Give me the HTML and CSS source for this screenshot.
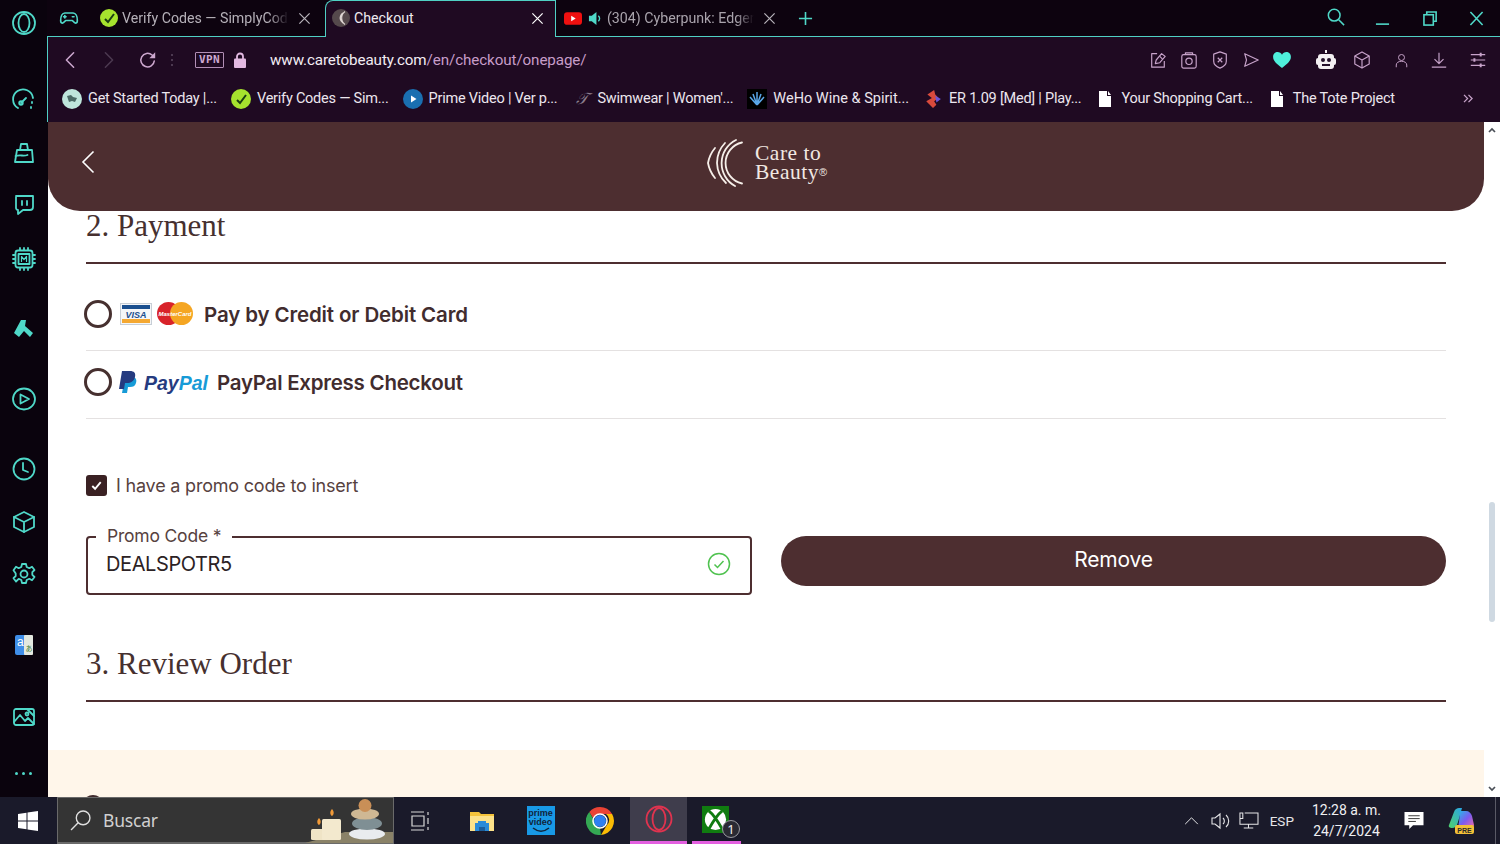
FILE: index.html
```html
<!DOCTYPE html>
<html lang="en">
<head>
<meta charset="utf-8">
<title>Checkout</title>
<link rel="stylesheet" href="styles.css">
</head>
<body>
<div class="app">
  <nav class="sidebar">
    <svg class="side-icon first" viewBox="0 0 24 24"><circle cx="12" cy="12" r="11"/><ellipse cx="12" cy="12" rx="5.500" ry="9"/></svg>
    <svg class="side-icon g53" viewBox="0 0 24 24"><path d="M6 20A10 10 0 1 1 21 10"/><path d="M9 15l5-5"/><circle cx="9" cy="15" r="1.800"/><path d="M20 14v1M19 19v1"/></svg>
    <svg class="side-icon g29" viewBox="0 0 24 24"><path d="M8 9l1-6h6l1 6"/><path d="M5 9h15l1 12H3z"/><path d="M3.500 15c5-1.500 8 .5 12-1"/></svg>
    <svg class="side-icon g28" viewBox="0 0 24 24"><path d="M4 3h17v11a3 3 0 0 1-3 3h-7l-5 4v-4a2 2 0 0 1-2-2V4a1 1 0 0 1 1-1z"/><path d="M10 8v4M15 8v4"/></svg>
    <svg class="side-icon g30" viewBox="0 0 24 24"><rect x="3.500" y="3.500" width="17" height="17" rx="2.500"/><rect x="6.500" y="7" width="11" height="10"/><path d="M8 1v2M12 1v2M16 1v2M8 21v2M12 21v2M16 21v2M1 8h2M1 12h2M1 16h2M21 8h2M21 12h2M21 16h2"/><path class="thin" d="M9.500 14.500v-5l2.500 3 2.500-3v5"/></svg>
    <svg class="side-icon g46" viewBox="0 0 24 24"><path class="solid" d="M9 3h5l-1 6 8 7-3 4-6-6-5 6-5-4z"/></svg>
    <svg class="side-icon g46" viewBox="0 0 24 24"><ellipse cx="12" cy="12" rx="11" ry="10.500"/><path d="M8.500 7.500 17 12l-8.500 4.500z"/></svg>
    <svg class="side-icon g46" viewBox="0 0 24 24"><circle cx="12" cy="12" r="10.500"/><path d="M11 6v7l5 2"/></svg>
    <svg class="side-icon g29" viewBox="0 0 24 24"><path d="M12 2l10 5v10l-10 5-10-5V7z"/><path d="M2 7l10 5 10-5M12 12v10"/></svg>
    <svg class="side-icon g28" viewBox="0 0 24 24"><circle cx="12" cy="12" r="3.500"/><path d="M10 2h4l.7 3 2.600 1.200 2.700-1.500 2.500 3.300-2.200 2.200v2.600l2.200 2.200-2.500 3.300-2.700-1.500-2.600 1.200-.7 3h-4l-.7-3-2.600-1.200L4 19.500 1.500 16.200l2.200-2.200v-2.600L1.500 8.200 4 4.700l2.700 1.500L9.300 5z"/></svg>
    <svg class="side-icon g47" viewBox="0 0 24 24"><rect class="flat-blue" x="3" y="2" width="12" height="20" rx="2"/><rect class="flat-light" x="12" y="2" width="9" height="20" rx="1"/><text class="trans-a" x="5" y="13">a</text><text class="trans-j" x="13.500" y="18">あ</text></svg>
    <svg class="side-icon g48" viewBox="0 0 24 24"><rect x="2" y="4" width="20" height="16" rx="2"/><path d="M2 17l6-7 5 6 3-3 6 6"/><path d="M15 4l7 7"/><circle cx="15" cy="9" r="1.500"/></svg>
    <div class="side-more g32"><i></i><i></i><i></i></div>
  </nav>

  <div class="browser">
    <div class="tabstrip">
      <svg class="strip-icon game" viewBox="0 0 24 24"><path d="M7 6h10c3 0 5 4 5 9 0 4-3 4-5 1l-1-1H8l-1 1c-2 3-5 3-5-1 0-5 2-9 5-9z"/><path d="M7 9v3M5.500 10.500h3M16 10.500h2"/></svg>
      <div class="tab tab-first">
        <span class="fav fav-lime"><svg viewBox="0 0 16 16"><path d="M4 9l3 3 6-8"/></svg></span>
        <span class="tab-title fade">Verify Codes — SimplyCod</span>
        <svg class="tab-x" viewBox="0 0 14 14"><path d="M1.500 1.500l11 11M12.500 1.500l-11 11"/></svg>
      </div>
      <div class="tab tab-active">
        <span class="fav fav-care"><svg viewBox="0 0 16 16"><path d="M10 3a6 6 0 0 0 0 10M12 1.500a8 8 0 0 0 0 13M8.500 5a4 4 0 0 0 0 6"/></svg></span>
        <span class="tab-title">Checkout</span>
        <svg class="tab-x bright" viewBox="0 0 14 14"><path d="M1.500 1.500l11 11M12.500 1.500l-11 11"/></svg>
      </div>
      <div class="tab tab-yt">
        <svg class="yt" viewBox="0 0 20 14"><rect width="20" height="14" rx="3.500"/><path d="M8 4l5 3-5 3z"/></svg>
        <svg class="sound" viewBox="0 0 16 16"><path class="cone" d="M1 5h3l5-4v14l-5-4H1z"/><path class="wave" d="M11 5a4 4 0 0 1 0 6"/></svg>
        <span class="tab-title fade dim">(304) Cyberpunk: Edger</span>
        <svg class="tab-x" viewBox="0 0 14 14"><path d="M1.500 1.500l11 11M12.500 1.500l-11 11"/></svg>
      </div>
      <svg class="plus" viewBox="0 0 16 16"><path d="M8 1v14M1 8h14"/></svg>
      <div class="win-controls">
        <svg class="win-search" viewBox="0 0 20 20"><circle cx="8" cy="8" r="6.500"/><path d="M13 13l6 6"/></svg>
        <svg class="win-min" viewBox="0 0 16 16"><path d="M1 14h14"/></svg>
        <svg class="win-max" viewBox="0 0 16 16"><rect x="1" y="4" width="10" height="11"/><path d="M4 4V1h10v10h-3"/></svg>
        <svg class="win-close" viewBox="0 0 16 16"><path d="M1.500 1l13 14M14.500 1l-13 14"/></svg>
      </div>
    </div>

    <div class="toolbar">
      <div class="addressbar">
        <svg class="nav back" viewBox="0 0 12 20"><path d="M10 2L2 10l8 8"/></svg>
        <svg class="nav fwd" viewBox="0 0 12 20"><path d="M2 2l8 8-8 8"/></svg>
        <svg class="nav reload" viewBox="0 0 20 20"><path d="M17 11a7.500 7.500 0 1 1-2.500-6.500L17 7"/><path class="fill" d="M18 1.500V8h-6.500z"/></svg>
        <span class="grip"></span>
        <span class="vpn">VPN</span>
        <svg class="lock" viewBox="0 0 12 16"><path class="shackle" d="M3 7V4.500a3 3 0 0 1 6 0V7"/><rect y="6.500" width="12" height="9.500" rx="1"/></svg>
        <span class="url"><b>www.caretobeauty.com</b>/en/checkout/onepage/</span>
        <div class="tools">
          <svg class="tool" viewBox="0 0 20 20"><path d="M9 3H3v15h14v-7"/><path d="M7 14l1-4 6-7 4 3-6 7z"/><path d="M12 6l3 3"/></svg>
          <svg class="tool" viewBox="0 0 20 20"><rect x="2" y="4" width="16" height="15" rx="2"/><path d="M6 4V2h8v2"/><circle cx="10" cy="11.500" r="3.500"/></svg>
          <svg class="tool" viewBox="0 0 20 20"><path d="M10 1l7 2.500v8c0 4-3 6-7 7.500-4-1.500-7-3.500-7-7.500v-8z"/><path d="M7.500 7.500l5 5M12.500 7.500l-5 5"/></svg>
          <svg class="tool" viewBox="0 0 20 20"><path d="M3 3l15 7-15 7 2-7z"/></svg>
          <svg class="heart" viewBox="0 0 20 18"><path d="M10 18C4 13 0 10 0 5.500 0 2 2.500 0 5 0c2.200 0 4 1 5 3 1-2 2.800-3 5-3 2.500 0 5 2 5 5.500C20 10 16 13 10 18z"/></svg>
          <svg class="robot" viewBox="0 0 20 20"><path class="rb" d="M9 0h2v3H9z"/><rect class="rb" x="2" y="4" width="16" height="15" rx="3"/><rect class="rb" x="0" y="8" width="20" height="7" rx="2"/><circle class="re" cx="7" cy="10" r="2"/><circle class="re" cx="13" cy="10" r="2"/><rect class="re" x="6" y="14" width="8" height="2"/></svg>
          <svg class="tool sp4" viewBox="0 0 20 20"><path d="M10 1l8 4.500v9L10 19l-8-4.500v-9z"/><path d="M2 5.500l8 4.500 8-4.500M10 10v9"/></svg>
          <svg class="tool small sp10" viewBox="0 0 20 20"><circle cx="10" cy="6" r="4"/><path d="M3 19v-3c0-3 3-5 7-5s7 2 7 5v3"/></svg>
          <svg class="tool sp8" viewBox="0 0 20 20"><path d="M10 2v12M5 9l5 5 5-5M2 18h16"/></svg>
          <svg class="tool sp8" viewBox="0 0 20 20"><path d="M2 4h16M2 10h16M2 16h16"/><path class="thick" d="M13 2v4M6 8v4M13 14v4"/></svg>
        </div>
      </div>
      <div class="bookmarks">
        <span class="mark"><span class="fav bm-a"><svg viewBox="0 0 16 16"><path d="M3 5l4-1 2 2 4 1-2 4-3-1-3 1z"/></svg></span>Get Started Today |...</span>
        <span class="mark"><span class="fav fav-lime"><svg viewBox="0 0 16 16"><path d="M4 9l3 3 6-8"/></svg></span>Verify Codes — Sim...</span>
        <span class="mark"><span class="fav bm-prime"><svg viewBox="0 0 16 16"><path d="M6 4.500L11.500 8 6 11.500z"/></svg></span>Prime Video | Ver p...</span>
        <span class="mark"><span class="fav bm-swim">𝒯</span>Swimwear | Women'...</span>
        <span class="mark mark-wide"><span class="fav bm-weho"><svg viewBox="0 0 16 16"><path d="M8 14L1 6M8 14L4 3M8 14V1M8 14l4-11M8 14l7-8"/></svg></span>WeHo Wine &amp; Spirit...</span>
        <span class="mark"><span class="fav bm-er"><svg viewBox="0 0 16 16"><path class="er1" d="M9 0L3 4l4 3-5 3 6 6 3-3-2-3 4-3-3-3z"/><path class="er2" d="M10 5l5 3-4 3z"/></svg></span>ER 1.09 [Med] | Play...</span>
        <span class="mark"><span class="fav bm-doc"><svg viewBox="0 0 16 16"><path d="M2 0h8v5h4v11H2zM11 0l3 4h-3z"/></svg></span>Your Shopping Cart...</span>
        <span class="mark"><span class="fav bm-doc"><svg viewBox="0 0 16 16"><path d="M2 0h8v5h4v11H2zM11 0l3 4h-3z"/></svg></span>The Tote Project</span>
        <svg class="more" viewBox="0 0 12 10"><path d="M1 1l4 4-4 4M6 1l4 4-4 4"/></svg>
      </div>
    </div>

    <div class="viewport">
      <main class="page">
        <header class="site-header">
          <svg class="site-back" viewBox="0 0 14 24"><path d="M12.500 1.500L2 12l10.500 10.500"/></svg>
          <div class="brand">
            <svg class="brand-mark" viewBox="0 0 36 48"><path d="M35 3.500a21 21 0 0 0 0 41"/><path d="M29 1a26 26 0 0 0-1 46"/><path d="M18 4A29 29 0 0 0 10 24a29 29 0 0 0 9 20"/><path d="M8 9A32 32 0 0 0 1 24a32 32 0 0 0 7 15"/></svg>
            <div class="brand-name"><span>Care to</span><span>Beauty<sup>®</sup></span></div>
          </div>
        </header>

        <div class="content">
          <h2 class="section-title">2. Payment</h2>
          <div class="pay-option first-option">
            <span class="radio"></span>
            <svg class="visa" viewBox="0 0 32 22"><rect x=".5" y=".5" width="31" height="21" fill="#f4f6f8" stroke="#c7ced6"/><rect x="2" y="2" width="28" height="4" fill="#1a4f8f"/><rect x="2" y="16" width="28" height="4" fill="#f4a832"/><text x="16" y="14.500" class="visa-text">VISA</text></svg>
            <svg class="mc" viewBox="0 0 36 23"><circle cx="11.500" cy="11.500" r="11.500" fill="#d8232a"/><circle cx="24.500" cy="11.500" r="11.500" fill="#f5a623"/><text x="18" y="13.500" class="mc-text">MasterCard</text></svg>
            <span class="pay-label">Pay by Credit or Debit Card</span>
          </div>
          <div class="pay-option">
            <span class="radio"></span>
            <svg class="pp-mark" viewBox="0 0 18 23"><path fill="#179bd7" d="M6 6h7c4 0 5 3 4 6-1 3-3 4-6 4H9l-1 6H3z"/><path fill="#253b80" d="M3 0h8c4 0 6 2 5 6-1 4-4 6-8 6H6l-1 6H0z"/></svg>
            <span class="pp-word"><span class="pp-pay">Pay</span><span class="pp-pal">Pal</span></span>
            <span class="pay-label">PayPal Express Checkout</span>
          </div>

          <label class="promo-check">
            <span class="checkbox"><svg viewBox="0 0 16 16"><path d="M3.500 8.500l3 3 6-7"/></svg></span>
            I have a promo code to insert
          </label>

          <div class="promo-row">
            <div class="field">
              <span class="field-label">Promo Code *</span>
              <span class="field-value">DEALSPOTR5</span>
              <svg class="ok" viewBox="0 0 24 24"><circle cx="12" cy="12" r="10.500"/><path d="M7.500 12.500l3 3 6-6.500"/></svg>
            </div>
            <button class="remove" type="button">Remove</button>
          </div>

          <h2 class="section-title review">3. Review Order</h2>
        </div>

        <section class="cream"><span class="cream-dot"></span></section>
      </main>
      <div class="scrollbar">
        <svg class="arrow" viewBox="0 0 8 6"><path d="M1 5l3-3 3 3"/></svg>
        <div class="thumb"></div>
        <svg class="arrow down" viewBox="0 0 8 6"><path d="M1 1l3 3 3-3"/></svg>
      </div>
    </div>
  </div>
</div>

<footer class="taskbar">
  <svg class="start" viewBox="0 0 20 20"><path d="M0 3l8.500-1.200V9.500H0zM9.500 1.600L20 0v9.500H9.500zM0 10.500h8.500v7.700L0 17zM9.500 10.500H20V20L9.500 18.400z"/></svg>
  <div class="search">
    <svg class="search-glass" viewBox="0 0 20 20"><circle cx="12.500" cy="7.500" r="6.500"/><path d="M8 12l-7 7"/></svg>
    <span class="search-text">Buscar</span>
    <svg class="search-art" viewBox="0 0 88 46"><path fill="#8a8268" d="M0 46L40 35h48v11z"/><rect x="6" y="32" width="18" height="11" rx="1.500" fill="#efe4c6"/><rect x="17" y="22" width="19" height="21" rx="1.500" fill="#f3e9ce"/><path fill="#f19a38" d="M14 21c2.500 2.500 2 6 0 7-2-1-2.500-4.500 0-7zM27 12c2.500 2.500 2 6 0 7-2-1-2.500-4.500 0-7z"/><ellipse cx="62" cy="37" rx="18" ry="5.500" fill="#e9ecef"/><ellipse cx="62" cy="26.500" rx="15" ry="6.500" fill="#7f8f94"/><ellipse cx="60" cy="17" rx="14" ry="5.500" fill="#cfb894"/><circle cx="60" cy="8.500" r="6.500" fill="#c98f57"/></svg>
  </div>
  <div class="task-icons">
    <span class="task"><svg class="taskview" viewBox="0 0 20 20"><path d="M1 1h13M1 19h13M2 5h12v10H2zM18 1v3M18 7v6M18 16v3"/></svg></span>
    <span class="task"><svg class="icon-24" viewBox="0 0 24 24"><path fill="#f5c33b" d="M0 3h9l2 2h13v17H0z"/><path fill="#fde28a" d="M0 7h24v15H0z"/><path fill="#2a8bd8" d="M8 12h8v2h3v8H5v-8h3z"/><path fill="#1c5f9c" d="M9 18h6v4H9z"/></svg></span>
    <span class="task"><span class="prime"><b>prime<br>video</b><svg viewBox="0 0 20 6"><path d="M2 1c5 4 11 4 16 0"/></svg></span></span>
    <span class="task"><svg class="icon-28" viewBox="0 0 28 28"><path fill="#ea4335" d="M14 0a14 14 0 0 1 12.100 7H14a7 7 0 0 0-6.600 4.700L3.300 5A14 14 0 0 1 14 0z"/><path fill="#fbbc05" d="M26.100 7A14 14 0 0 1 15 28l5.900-10A7 7 0 0 0 20 7z"/><path fill="#34a853" d="M3.300 5l5.600 10A7 7 0 0 0 14 21l1 7A14 14 0 0 1 3.300 5z"/><circle cx="14" cy="14" r="6" fill="#2f7ff2"/><circle cx="14" cy="14" r="7" fill="none" stroke="#fff" stroke-width="1.500"/></svg></span>
    <span class="task task-on"><svg class="icon-28 opera" viewBox="0 0 28 28"><circle cx="14" cy="14" r="12.500"/><ellipse cx="14" cy="14" rx="6.500" ry="11"/></svg></span>
    <span class="task task-xbox"><span class="xbox"><svg viewBox="0 0 28 28"><circle cx="14" cy="14" r="11" fill="#fff"/><path d="M7 5c4 3 9 10 14 19M21 5C17 8 12 15 7 24"/></svg></span><span class="count">1</span></span>
  </div>
  <div class="tray">
    <svg class="tray-caret" viewBox="0 0 16 10"><path d="M1 9l7-7 7 7"/></svg>
    <svg class="tray-sound" viewBox="0 0 20 20"><path d="M2 7h3l5-4v14l-5-4H2zM13 7a4 4 0 0 1 0 6M16 4a8 8 0 0 1 0 12"/></svg>
    <svg class="tray-net" viewBox="0 0 22 20"><path d="M7 2h14v12H2V2h2M11 14v4M6 18h10M2 2h3v6H2z"/></svg>
    <span class="lang">ESP</span>
    <span class="clock"><span>12:28 a. m.</span><span>24/7/2024</span></span>
    <svg class="notify" viewBox="0 0 20 20"><path d="M0 1h20v14H9l-4 4v-4H0z"/><path class="lines" d="M4 5h12M4 8h12M4 11h8"/></svg>
    <svg class="copilot" viewBox="0 0 28 28"><defs><linearGradient id="cp1" x1="0" y1="0" x2="1" y2="1"><stop offset="0" stop-color="#27b9e8"/><stop offset=".5" stop-color="#7b5cf0"/><stop offset="1" stop-color="#f06ba8"/></linearGradient><linearGradient id="cp2" x1="0" y1="1" x2="1" y2="0"><stop offset="0" stop-color="#4fd06a"/><stop offset="1" stop-color="#2aa7e8"/></linearGradient></defs><path fill="url(#cp2)" d="M2 18L7 5c1-3 3-4 5-4h3l-4 14c-1 4-3 6-6 6-2 0-4-1-3-3z"/><path fill="url(#cp1)" d="M13 4h6c3 0 5 2 6 5l2 9c0 3-3 3-5 2h-8c-2 0-3-2-2-5z"/><rect x="8" y="18" width="19" height="9" rx="2" fill="#f2c037"/><text x="17.500" y="25.500" class="pre">PRE</text></svg>
    <span class="desk-line"></span>
  </div>
</footer>
</body>
</html>
```

FILE: styles.css
```css
* { box-sizing: border-box; }
html, body { margin: 0; height: 844px; overflow: hidden; }
body { width: 1500px; background: #0b030e; font-family: Roboto, "Noto Sans", sans-serif; display: flex; flex-direction: column; }
svg { display: block; flex: none; }
.app { display: flex; height: 797px; }

/* Sidebar */
.sidebar { width: 48px; flex: none; background: #0a030d; display: flex; flex-direction: column; align-items: center; padding: 11px 1px 0 0; }
.side-icon { width: 24px; height: 24px; fill: none; stroke: #4fd8c8; stroke-width: 1.800; stroke-linejoin: round; stroke-linecap: round; }
.side-icon .thin { stroke-width: 1.200; }
.side-icon .solid { fill: #4fd8c8; stroke: none; }
.side-icon .flat-blue { fill: #3f8ee8; stroke: none; }
.side-icon .flat-light { fill: #e3e8df; stroke: none; }
.trans-a { fill: #fff; stroke: none; font: 12px "Liberation Sans", sans-serif; }
.trans-j { fill: #3f7b2c; stroke: none; font: 7px "Noto Sans CJK JP", sans-serif; }
.g28 { margin-top: 28px; } .g29 { margin-top: 29px; } .g30 { margin-top: 30px; } .g32 { margin-top: 32px; }
.g46 { margin-top: 46px; } .g47 { margin-top: 47px; } .g48 { margin-top: 48px; } .g53 { margin-top: 53px; }
.side-more { display: flex; gap: 4px; height: 24px; align-items: center; }
.side-more i { width: 3px; height: 3px; border-radius: 50%; background: #4fd8c8; }

/* Browser */
.browser { flex: 1; min-width: 0; display: flex; flex-direction: column; }
.tabstrip { height: 37px; flex: none; display: flex; align-items: center; background: #0d030f; border-bottom: 1px solid #4fd0c4; padding-left: 12px; margin-left: -1px; }
.strip-icon.game { width: 20px; height: 20px; fill: none; stroke: #4fd8c8; stroke-width: 2; stroke-linejoin: round; stroke-linecap: round; }
.tab { height: 37px; display: flex; align-items: center; color: #e9e3ea; font-size: 14.200px; white-space: nowrap; }
.tab-first { width: 215px; margin-left: 21px; margin-right: 10px; }
.tab-active { width: 231px; height: 37px; margin-bottom: -1px; align-self: flex-start; background: #1f0a22; border: 1px solid #4fd0c4; border-bottom: 0; border-radius: 8px 0 0 0; padding: 0 11px 2px 6px; }
.tab-yt { width: 216px; margin-left: 8px; }
.fav { width: 20px; height: 20px; flex: none; border-radius: 50%; display: flex; align-items: center; justify-content: center; }
.fav svg { width: 16px; height: 16px; fill: none; }
.fav-lime { background: #a6e22e; width: 18px; height: 18px; }
.fav-lime svg { stroke: #1a3c12; stroke-width: 2; }
.fav-care { background: #55494c; width: 18px; height: 18px; }
.fav-care svg { stroke: #ded5d2; stroke-width: 1.200; }
.tab-title { margin-left: 4px; flex: 1; }
.tab-title.fade { color: #a9a3ac; -webkit-mask-image: linear-gradient(90deg, #000 88%, transparent); mask-image: linear-gradient(90deg, #000 88%, transparent); }
.tab-first .tab-title { margin-right: 9px; color: #b5b0b8; }
.tab-yt .tab-title { margin-right: 9px; }
.tab-active .tab-title { margin-left: 4px; color: #efeaf0; }
.tab-x { width: 13px; height: 13px; fill: none; stroke: #b8b3bb; stroke-width: 1.300; margin-right: 4px; }
.tab-x.bright { stroke: #fff; margin-right: 0; }
.yt { width: 18px; height: 13px; }
.yt rect { fill: #f01010; } .yt path { fill: #fff; }
.sound { width: 15px; height: 15px; margin-left: 6px; }
.sound .cone { fill: #4fd8c8; } .sound .wave { fill: none; stroke: #4fd8c8; stroke-width: 1.500; }
.plus { width: 15px; height: 15px; fill: none; stroke: #4fd8c8; stroke-width: 1.700; margin-left: 18px; }
.win-controls { margin-left: auto; display: flex; align-items: center; padding-right: 16px; }
.win-controls svg { fill: none; stroke: #4fd8c8; stroke-width: 1.700; }
.win-search { width: 18px; height: 18px; margin-bottom: 2px; }
.win-min { width: 15px; height: 15px; margin-left: 30px; }
.win-max { width: 15px; height: 15px; margin-left: 33px; }
.win-close { width: 15px; height: 15px; margin-left: 31px; }

.toolbar { height: 85px; flex: none; background: #1f0a22; border-left: 1px solid #4fd0c4; margin-left: -1px; }
.addressbar { height: 47px; display: flex; align-items: center; padding: 0 0 1px 16px; color: #cda8cf; }
.nav { fill: none; stroke: #cda8cf; stroke-width: 1.700; stroke-linecap: round; stroke-linejoin: round; }
.nav.back, .nav.fwd { width: 12px; height: 18px; }
.nav.fwd { stroke: #4c3950; margin-left: 27px; }
.nav.reload { width: 18px; height: 18px; margin-left: 24px; }
.nav.reload .fill { fill: #cda8cf; stroke: none; }
.grip { width: 2px; height: 12px; margin-left: 14px; background: repeating-linear-gradient(#4c3950 0 2px, transparent 2px 5px); }
.vpn { width: 29px; height: 16px; margin-left: 22px; border: 1px solid #b28fb6; border-radius: 1px; font: 700 11px/14px "DejaVu Sans Mono", monospace; letter-spacing: .3px; text-align: center; }
.lock { width: 12px; height: 16px; margin-left: 10px; }
.lock rect { fill: #e3b9e2; } .lock .shackle { fill: none; stroke: #e3b9e2; stroke-width: 1.800; }
.url { margin-left: 24px; font-size: 15.200px; letter-spacing: -.1px; color: #c79dc9; }
.url b { font-weight: 400; color: #f2ecf3; }
.tools { margin-left: auto; display: flex; align-items: center; padding-right: 13px; gap: 13px; }
.tool { width: 18px; height: 18px; fill: none; stroke: #c7a3ca; stroke-width: 1.300; stroke-linejoin: round; }
.tool.small { width: 15px; height: 15px; }
.tool.sp4 { margin-left: 4px; }
.tool.sp8 { margin-left: 8px; }
.tool.sp10 { margin-left: 10px; }
.tool .thick { stroke-width: 2.200; }
.heart { width: 18px; height: 16px; fill: #4ff0dc; margin-right: 12px; }
.robot { width: 20px; height: 20px; }
.robot .rb { fill: #f3f0f2; } .robot .re { fill: #24102a; }

.bookmarks { height: 37px; display: flex; align-items: center; padding: 0 26px 8px 14px; gap: 14px; color: #ece6ee; font-size: 14.500px; letter-spacing: -.23px; }
.mark { display: flex; align-items: center; gap: 6px; white-space: nowrap; }
.mark-wide { letter-spacing: 0; }
.bm-a { background: #bfe6dc; }
.bm-a svg { fill: #4b6b66; }
.bookmarks .fav-lime { width: 20px; height: 20px; }
.bm-prime { background: #1a6fb0; }
.bm-prime svg { fill: #fff; }
.bm-swim { border-radius: 0; color: #8a7d8c; font: italic 16px "Liberation Serif", serif; }
.bm-weho { border-radius: 0; background: #000; }
.bm-weho svg { fill: none; stroke: #5aa7e8; stroke-width: 1.500; }
.bm-er { border-radius: 0; }
.bm-er svg { width: 18px; height: 18px; }
.bm-er .er1 { fill: #d84a3c; } .bm-er .er2 { fill: #6a55d8; }
.bm-doc { border-radius: 0; }
.bm-doc svg { fill: #fff; }
.more { width: 11px; height: 9px; margin-left: auto; fill: none; stroke: #c7a3ca; stroke-width: 1.400; }

/* Page */
.viewport { flex: 1; min-height: 0; display: flex; background: #fff; }
.page { flex: 1; min-width: 0; overflow: hidden; color: #3f2a2c; }
.site-header { height: 89px; background: #4d2e30; border-radius: 0 0 32px 32px; display: flex; align-items: center; position: relative; padding: 0 0 10px 33px; }
.site-back { width: 14px; height: 24px; fill: none; stroke: #fff; stroke-width: 1.600; }
.brand { position: absolute; left: 659px; top: 17px; display: flex; align-items: center; gap: 12px; }
.brand-mark { width: 36px; height: 48px; fill: none; stroke: #f6efe9; stroke-width: 1.800; stroke-linecap: round; }
.brand-name { display: flex; flex-direction: column; gap: 0; color: #f1e8e2; font: 21.500px/19.500px "Liberation Serif", serif; letter-spacing: .5px; }
.brand-name span { display: block; height: 19.500px; }
.brand-name sup { font: 11px/0 "Liberation Sans", sans-serif; vertical-align: 3px; }

.content { padding: 0 38px; }
.section-title { margin: 0; height: 53px; font: 400 31px/29px "Liberation Serif", serif; color: #46302f; border-bottom: 2px solid #4d2e30; }
.pay-option { height: 68px; padding-bottom: 6px; display: flex; align-items: center; border-bottom: 1px solid #e4e1e1; }
.first-option { margin-top: 19px; }
.radio { width: 28px; height: 28px; margin-left: -2px; flex: none; border-radius: 50%; border: 3px solid #46302f; background: #fff; }
.visa { width: 32px; height: 22px; margin-left: 8px; }
.visa-text { font: italic 700 9px "Liberation Sans", sans-serif; fill: #1a4f8f; text-anchor: middle; }
.mc { width: 36px; height: 23px; margin-left: 5px; }
.mc-text { font: italic 700 6px "Liberation Sans", sans-serif; fill: #fff; text-anchor: middle; }
.pay-label { font: 600 20.500px "Inter", sans-serif; letter-spacing: -.13px; color: #412c2e; margin-left: 11px; padding-top: 2px; white-space: nowrap; }
.pp-mark { width: 18px; height: 23px; margin: 2px 0 0 7px; }
.pp-word { margin-left: 7px; font: italic 700 19.500px "Liberation Sans", sans-serif; padding-top: 3px; }
.pp-word + .pay-label { margin-left: 9px; letter-spacing: -.25px; }
.pp-pay { color: #253b80; } .pp-pal { color: #179bd7; }

.promo-check { margin-top: 56px; height: 21px; display: flex; align-items: center; gap: 9px; font: 400 18px "Inter", sans-serif; color: #57423f; letter-spacing: -.2px; }
.checkbox { width: 21px; height: 21px; flex: none; border-radius: 3px; background: #3a2123; display: flex; align-items: center; justify-content: center; }
.checkbox svg { width: 15px; height: 15px; fill: none; stroke: #fff; stroke-width: 2; }
.promo-row { margin-top: 40px; display: grid; grid-template-columns: 666px 665px; gap: 29px; align-items: start; height: 58px; }
.field { position: relative; height: 59px; border: 2px solid #4d2e30; border-radius: 4px; display: flex; align-items: center; justify-content: space-between; padding: 0 19px 4px 18px; }
.field-label { position: absolute; left: 8px; top: -13px; padding: 0 11px; background: #fff; font: 400 17.500px/22px "Inter", sans-serif; color: #57423f; letter-spacing: -.2px; }
.field-value { font: 400 20px "Inter", sans-serif; color: #2c2224; letter-spacing: -.4px; }
.ok { width: 24px; height: 24px; fill: none; stroke: #4fc24f; stroke-width: 1.500; }
.remove { height: 50px; border: 0; border-radius: 25px; padding: 0 0 3px; background: #4d2e30; color: #fff; font: 400 21px "Inter", sans-serif; letter-spacing: -.2px; }
.section-title.review { margin-top: 55px; }
.cream { margin-top: 48px; height: 47px; background: #fff6ea; padding: 45px 0 0 34px; overflow: hidden; }
.cream-dot { display: block; width: 22px; height: 22px; border-radius: 50%; background: #3f2a2c; }

.scrollbar { width: 16px; flex: none; display: flex; flex-direction: column; align-items: center; background: #fff; padding: 5px 0; }
.arrow { width: 8px; height: 6px; fill: none; stroke: #4a4f57; stroke-width: 1.700; }
.arrow.down { margin-top: auto; }
.thumb { width: 6px; height: 120px; margin-top: 369px; border-radius: 3px; background: #cfd9e2; }

/* Taskbar */
.taskbar { height: 47px; flex: none; display: flex; align-items: center; background: #1a1a2a; color: #f0f0f2; }
.start { width: 20px; height: 20px; margin-left: 18px; fill: #fff; }
.search { width: 337px; height: 47px; margin-left: 19px; display: flex; align-items: center; background: #343434; border: 1px solid #6a6a6a; border-bottom-width: 2px; padding-left: 12px; }
.search-glass { width: 21px; height: 21px; fill: none; stroke: #e0e0e0; stroke-width: 1.300; }
.search-text { margin-left: 12px; font: 17.500px "Noto Sans", sans-serif; letter-spacing: -.2px; color: #d0d0d0; }
.search-art { width: 88px; height: 46px; margin-left: auto; }
.task-icons { display: flex; margin-left: -6px; height: 47px; }
.task { width: 59px; height: 47px; display: flex; align-items: center; justify-content: center; }
.task:first-child { width: 64px; }
.taskview { width: 20px; height: 20px; fill: none; stroke: #d8d8d8; stroke-width: 1.200; }
.icon-24 { width: 26px; height: 24px; }
.icon-28 { width: 28px; height: 28px; }
.prime { width: 28px; height: 29px; background: #1899e6; color: #11243a; text-align: center; display: block; }
.prime b { display: block; font: 700 9px/9px "Liberation Sans", sans-serif; padding-top: 3px; }
.prime svg { width: 20px; height: 6px; margin: 0 auto; fill: none; stroke: #11243a; stroke-width: 1.500; }
.task-on { width: 57px; margin-left: 1px; background: #3f3d4c; border-bottom: 3px solid #e35fe0; }
.opera { fill: none; stroke: #e0334f; stroke-width: 1.800; }
.task-xbox { width: 49px; margin-left: 5px; position: relative; border-bottom: 3px solid #e35fe0; justify-content: flex-start; padding-left: 10px; }
.xbox { width: 27px; height: 27px; background: #107c10; display: block; }
.xbox svg { width: 27px; height: 27px; fill: none; stroke: #107c10; stroke-width: 3; }
.xbox svg circle { stroke: none; }
.count { position: absolute; left: 30px; top: 23px; width: 18px; height: 18px; border-radius: 50%; background: #2a2a33; border: 1px solid #9a9aa0; font: 13px/16px "Noto Sans", sans-serif; text-align: center; }
.tray { margin-left: auto; display: flex; align-items: center; height: 47px; }
.tray svg { fill: none; stroke: #e6e6e8; stroke-width: 1.100; }
.tray-caret { width: 15px; height: 9px; }
.tray-sound { width: 20px; height: 20px; margin-left: 11px; }
.tray-net { width: 21px; height: 19px; margin-left: 8px; }
.lang { margin-left: 11px; font-size: 13.500px; color: #e6e6e8; }
.clock { margin-left: 18px; display: flex; flex-direction: column; align-items: center; font-size: 14px; line-height: 21px; padding-top: 1px; color: #f0f0f2; }
.tray .notify { width: 20px; height: 19px; margin-left: 23px; fill: #fff; stroke: none; }
.tray .notify .lines { fill: none; stroke: #333; stroke-width: 1; }
.tray .copilot { width: 28px; height: 28px; margin-left: 23px; stroke: none; }
.pre { font: 700 7px "Liberation Sans", sans-serif; fill: #2a2a2a; text-anchor: middle; }
.desk-line { width: 1px; height: 47px; margin-left: 20px; margin-right: 4px; background: #5a5a66; }
```
